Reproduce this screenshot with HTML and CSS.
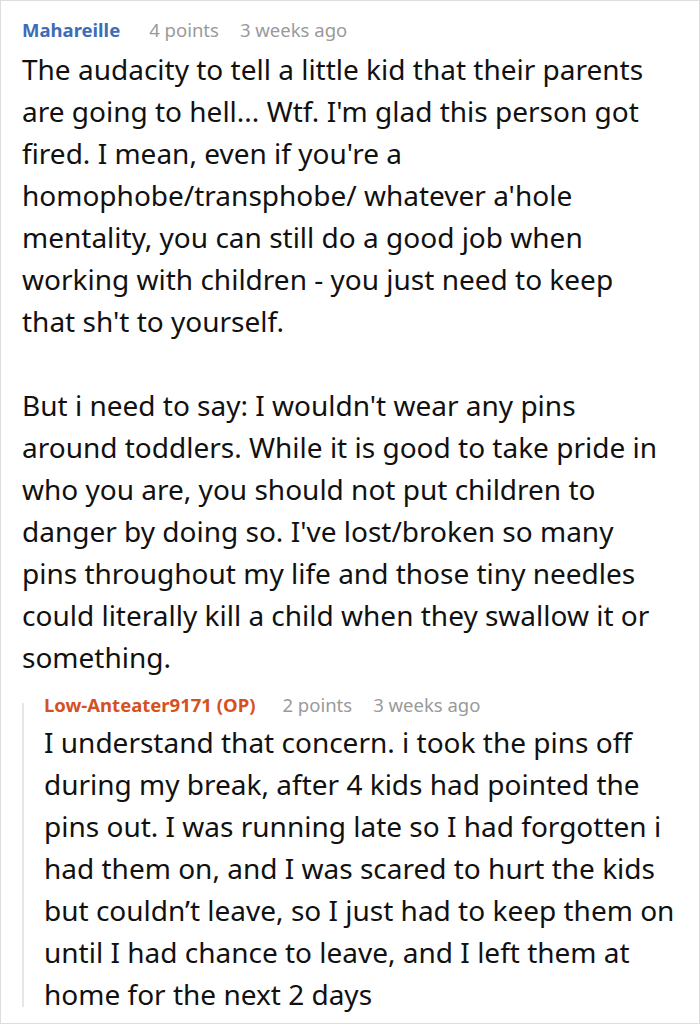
FILE: index.html
```html
<!DOCTYPE html>
<html>
<head>
<meta charset="utf-8">
<link rel="stylesheet" href="styles.css">
</head>
<body>
<div class="frame">
  <div class="comment">
    <div class="meta">
      <span class="author">Mahareille</span>
      <span class="info">4 points</span>
      <span class="info">3 weeks ago</span>
    </div>
    <div class="text">
      <p>The audacity to tell a little kid that their parents are going to hell... Wtf. I'm glad this person got fired. I mean, even if you're a homophobe/transphobe/ whatever a'hole mentality, you can still do a good job when working with children - you just need to keep that sh't to yourself.</p>
      <p>But i need to say: I wouldn't wear any pins around toddlers. While it is good to take pride in who you are, you should not put children to danger by doing so. I've lost/broken so many pins throughout my life and those tiny needles could literally kill a child when they swallow it or something.</p>
    </div>
    <div class="reply">
      <div class="meta">
        <span class="author op">Low-Anteater9171 (OP)</span>
        <span class="info">2 points</span>
        <span class="info">3 weeks ago</span>
      </div>
      <div class="text">
        <p>I understand that concern. i took the pins off during my break, after 4 kids had pointed the pins out. I was running late so I had forgotten i had them on, and I was scared to hurt the kids but couldn’t leave, so I just had to keep them on until I had chance to leave, and I left them at home for the next 2 days</p>
      </div>
    </div>
  </div>
</div>
</body>
</html>
```
FILE: styles.css
```css
html, body {
  margin: 0;
  padding: 0;
  background: #fff;
}
.frame {
  box-sizing: border-box;
  width: 700px;
  height: 1024px;
  border: 1px solid #dedede;
  overflow: hidden;
  font-family: "Noto Sans", sans-serif;
}
.comment {
  padding: 17px 38px 0 21px;
}
.meta {
  font-size: 18.5px;
  line-height: 24px;
  display: flex;
  margin-bottom: 6px;
}
.reply .meta {
  margin-bottom: 4px;
}
.author {
  font-weight: bold;
  color: #3e6cb8;
  margin-right: 29px;
}
.author.op {
  color: #d5521f;
  margin-right: 27px;
}
.info {
  color: #9a9a9a;
  margin-right: 21px;
}
.text {
  font-size: 28px;
  line-height: 42px;
  color: #111;
}
.text p {
  margin: 0 0 42px 0;
}
.text p:last-child {
  margin-bottom: 0;
}
.reply {
  position: relative;
  margin-top: 15px;
  margin-right: -37px;
  padding-left: 22px;
}
.reply::before {
  content: "";
  position: absolute;
  left: 0;
  top: 10px;
  bottom: 8px;
  width: 2px;
  background: #e6e6e6;
}
```
